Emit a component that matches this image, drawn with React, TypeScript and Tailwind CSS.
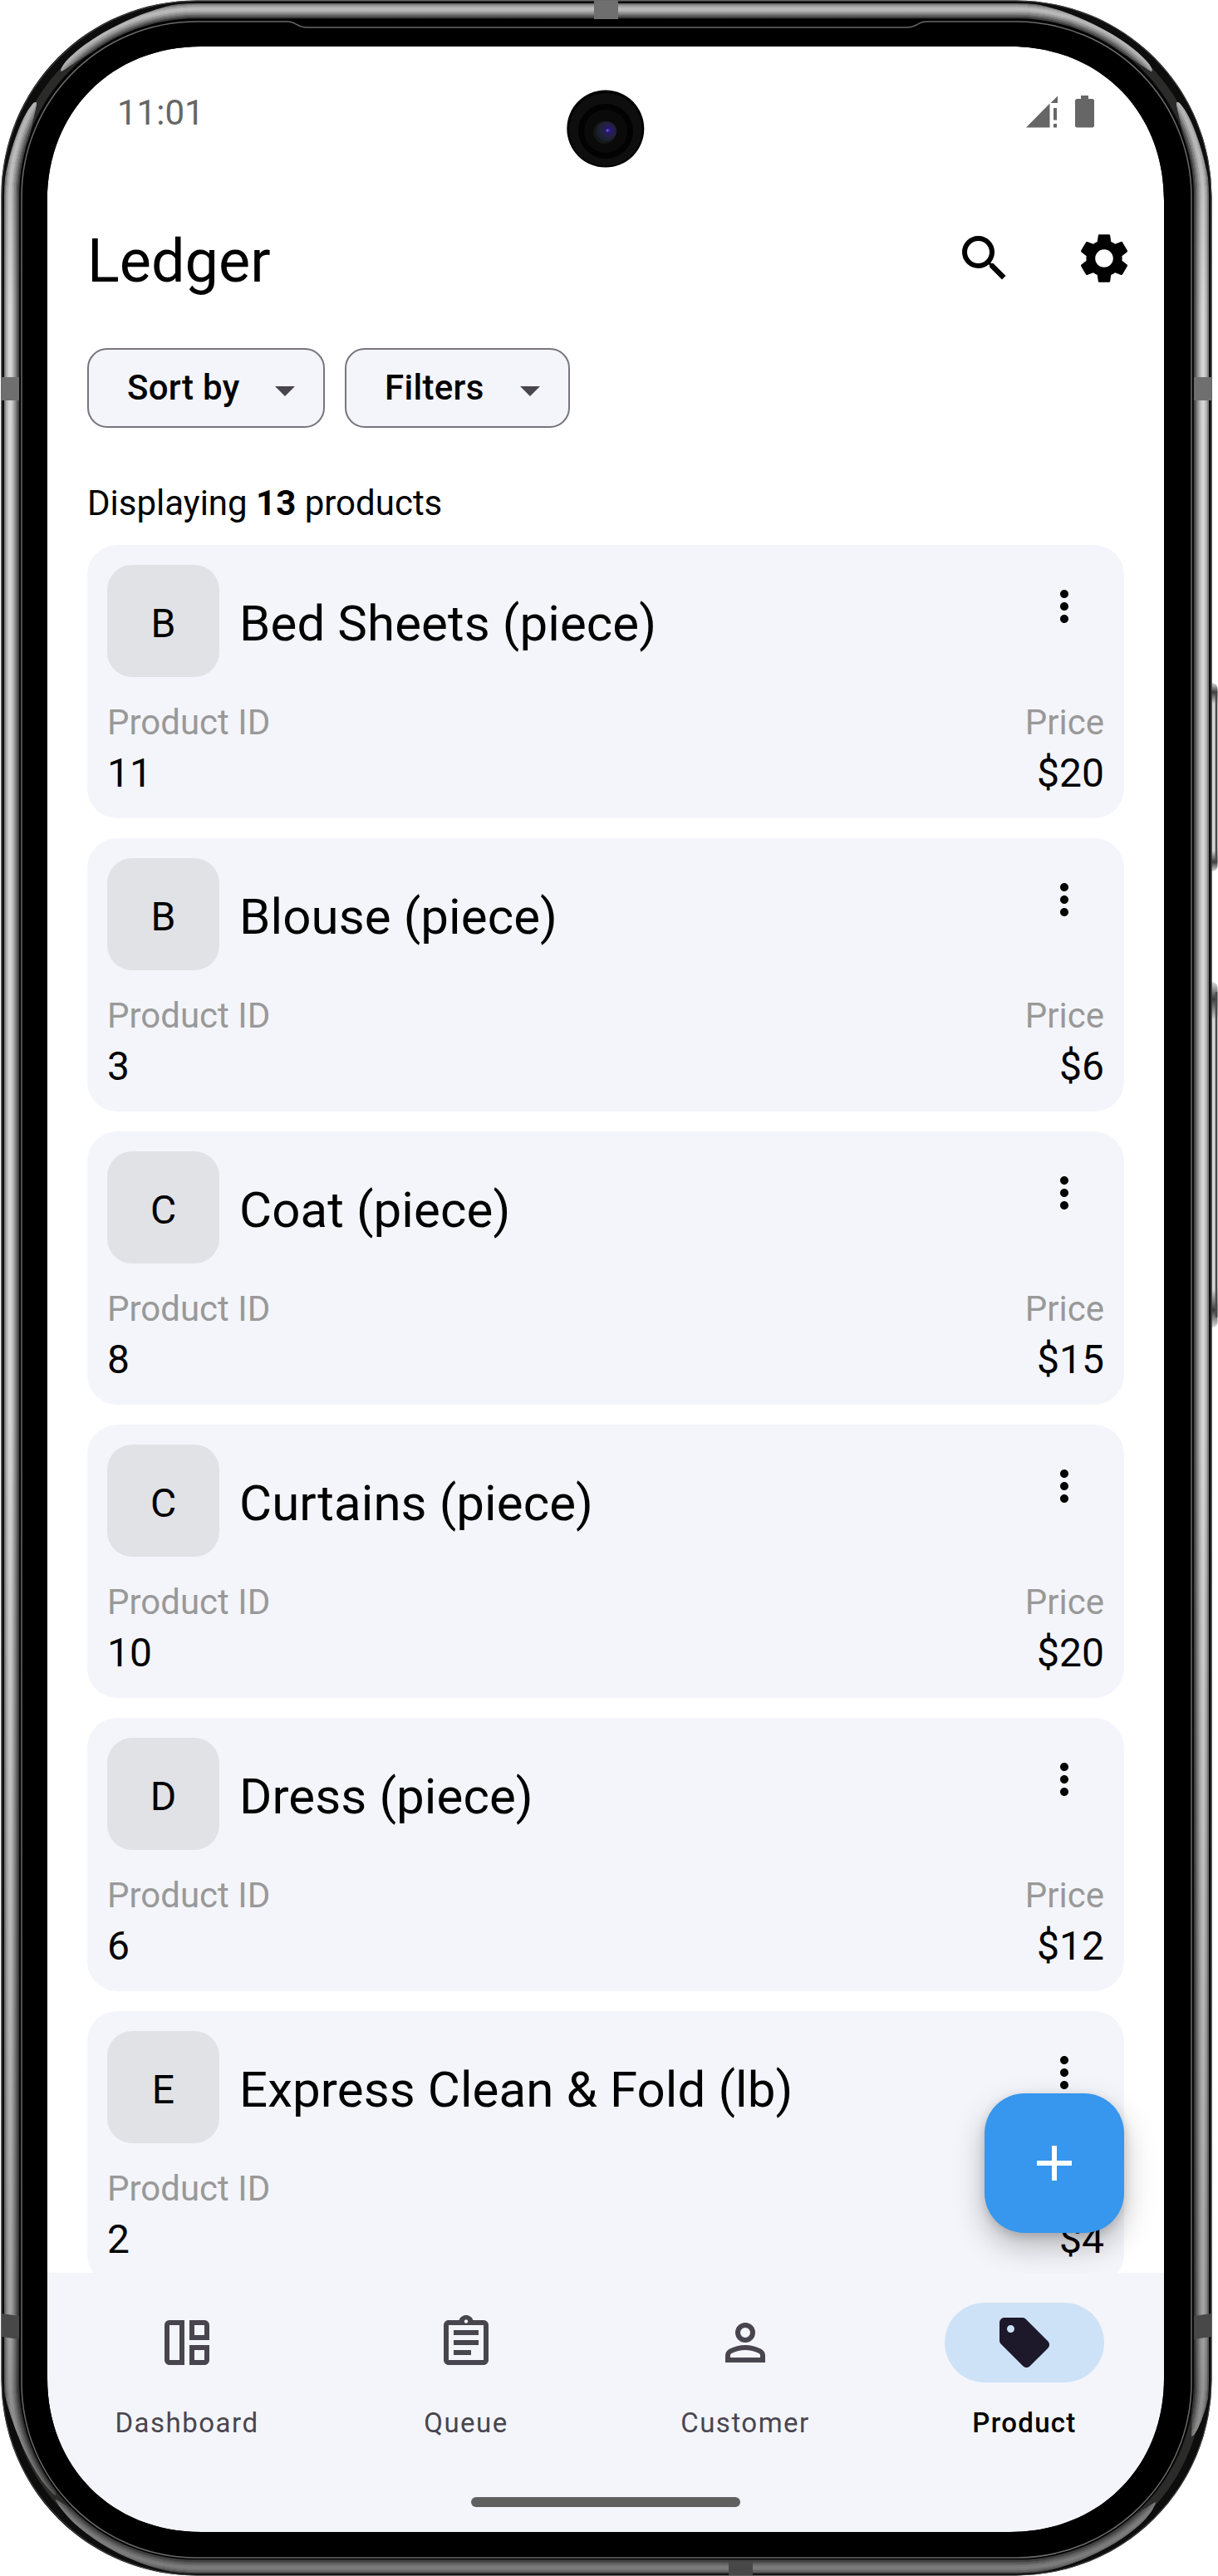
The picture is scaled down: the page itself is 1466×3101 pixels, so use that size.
import React from "react";
import { MdSearch, MdSettings, MdMoreVert, MdAdd, MdOutlineAssignment, MdSell } from "react-icons/md";

const products = [
  { name: "Bed Sheets (piece)", id: "11", price: "$20" },
  { name: "Blouse (piece)", id: "3", price: "$6" },
  { name: "Coat (piece)", id: "8", price: "$15" },
  { name: "Curtains (piece)", id: "10", price: "$20" },
  { name: "Dress (piece)", id: "6", price: "$12" },
  { name: "Express Clean & Fold (lb)", id: "2", price: "$4" },
];

function DashboardIcon() {
  return (
    <svg className="size-[72px]" viewBox="0 0 24 24" fill="currentColor" fillRule="evenodd">
      <path d="M11 21H5c-1.1 0-2-.9-2-2V5c0-1.1.9-2 2-2h6zM5 5v14h4V5zM13 3h6c1.100 0 2 .9 2 2v6h-8zm2 2v4h4V5zM13 13h8v6c0 1.100-.9 2-2 2h-6zm2 2v4h4v-4z" />
    </svg>
  );
}

function PersonIcon() {
  return (
    <svg className="size-[72px]" viewBox="0 -960 960 960" fill="currentColor">
      <path d="M480-480q-66 0-113-47t-47-113q0-66 47-113t113-47q66 0 113 47t47 113q0 66-47 113t-113 47ZM160-160v-112q0-34 17.500-62.500T224-378q62-31 126-46.500T480-440q66 0 130 15.500T736-378q29 15 46.500 43.500T800-272v112H160Zm80-80h480v-32q0-11-5.500-20T700-306q-54-27-109-40.500T480-360q-56 0-111 13.500T260-306q-9 5-14.500 14t-5.500 20v32Zm240-320q33 0 56.500-23.500T560-640q0-33-23.500-56.500T480-720q-33 0-56.500 23.500T400-640q0 33 23.500 56.500T480-560Z" />
    </svg>
  );
}

function StatusBar() {
  return (
    <header className="flex h-[160px] shrink-0 items-center justify-between pl-[84px] pr-[84px] text-[#666]">
      <span className="text-[42px] leading-[60px]">11:01</span>
      <div className="mb-[3px] flex items-center gap-[21px]">
        <svg className="h-[39px] w-[38px]" viewBox="0 0 38 39" fill="currentColor">
          <path d="M0 38.500 28.500 9.500v29zM29.500 9 38 .500V9zM33 15h4v14.500h-4zM33 34h4v4.500h-4z" />
        </svg>
        <svg className="h-[39px] w-[23px]" viewBox="0 0 23 39" fill="currentColor">
          <path d="M7 0h9v4h4.500a2.500 2.500 0 0 1 2.500 2.500v29.500a2.500 2.500 0 0 1-2.500 2.500h-18a2.500 2.500 0 0 1-2.500-2.500V6.500a2.500 2.500 0 0 1 2.500-2.500H7z" />
        </svg>
      </div>
    </header>
  );
}

function Chip({ label, width }: { label: string; width: string }) {
  return (
    <button className={`flex h-[96px] ${width} items-center justify-between rounded-[24px] border-2 border-[#79747e] bg-[#f4f5fa] pl-[46px] pr-[34px]`}>
      <span className="text-[42px] font-medium leading-[60px] tracking-[0.3px]">{label}</span>
      <svg className="mt-[8px] h-[12px] w-[24px] text-[#49454f]" viewBox="0 0 24 12" fill="currentColor">
        <path d="M0 0h24L12 12z" />
      </svg>
    </button>
  );
}

function ProductCard({ name, id, price }: { name: string; id: string; price: string }) {
  return (
    <article className="flex h-[329px] shrink-0 flex-col rounded-[36px] bg-[#f4f5fa] p-[24px]">
      <div className="flex h-[135px] items-center">
        <div className="flex size-[135px] items-center justify-center rounded-[30px] bg-[#e1e2e6] pt-[7px] text-[48px] leading-[72px]">
          {name[0]}
        </div>
        <h2 className="ml-[24px] flex-1 pt-[6px] text-[60px] leading-[84px] tracking-[0.1px]">{name}</h2>
        <MdMoreVert className="mb-[35px] mr-[18px] size-[60px]" />
      </div>
      <div className="mt-[25px] flex justify-between text-[42px] leading-[60px] text-[#999]">
        <span>Product ID</span>
        <span>Price</span>
      </div>
      <div className="mt-px flex justify-between text-[48px] leading-[60px]">
        <span>{id}</span>
        <span>{price}</span>
      </div>
    </article>
  );
}

function NavItem({ label, icon, active = false }: { label: string; icon: React.ReactNode; active?: boolean }) {
  return (
    <div className="flex flex-1 flex-col items-center pt-[36px]">
      <div className={active ? "flex h-[96px] w-[192px] items-center justify-center rounded-full bg-[#cde2f6] text-[#1d192b]" : "flex h-[96px] w-[192px] items-center justify-center text-[#49454f]"}>
        {icon}
      </div>
      <span className={active ? "mt-[25px] text-[33px] font-medium leading-[48px] tracking-[1.3px] text-black" : "mt-[25px] text-[33px] leading-[48px] tracking-[1.5px] text-[#49454f]"}>
        {label}
      </span>
    </div>
  );
}

const rings: { inset: number; width: number; color: string }[] = [
  { inset: 4, width: 2, color: "#7d7d7d" },
  { inset: 6, width: 2.500, color: "#adadad" },
  { inset: 8, width: 2.500, color: "#c6c6c6" },
  { inset: 10, width: 3, color: "#d6d6d6" },
  { inset: 12, width: 2.500, color: "#cecece" },
  { inset: 14, width: 2.500, color: "#b4b4b4" },
  { inset: 16, width: 2.500, color: "#969696" },
  { inset: 18, width: 2.500, color: "#707070" },
  { inset: 20, width: 2, color: "#484848" },
];

const screenHole =
  "M57 241C57 134 135 56 242 56H1216C1323 56 1401 134 1401 241V2863C1401 2970 1323 3048 1216 3048H242C135 3048 57 2970 57 2863Z";

function PhoneFrame() {
  return (
    <svg className="pointer-events-none absolute inset-0" width="1466" height="3101" viewBox="0 0 1466 3101" fill="none">
      <defs>
        <linearGradient id="shade" x1="0" y1="0" x2="0" y2="3101" gradientUnits="userSpaceOnUse">
          <stop offset="0" stopColor="#000" stopOpacity="0.120" />
          <stop offset="0.030" stopColor="#000" stopOpacity="0.180" />
          <stop offset="0.120" stopColor="#000" stopOpacity="0" />
          <stop offset="0.550" stopColor="#000" stopOpacity="0" />
          <stop offset="0.900" stopColor="#000" stopOpacity="0.240" />
          <stop offset="0.970" stopColor="#000" stopOpacity="0.420" />
          <stop offset="1" stopColor="#000" stopOpacity="0.420" />
        </linearGradient>
        <linearGradient id="key" x1="0" y1="0" x2="0" y2="1">
          <stop offset="0" stopColor="#ddd" />
          <stop offset="0.050" stopColor="#3c3c3c" />
          <stop offset="0.110" stopColor="#d4d4d4" />
          <stop offset="0.890" stopColor="#d4d4d4" />
          <stop offset="0.950" stopColor="#3c3c3c" />
          <stop offset="1" stopColor="#ddd" />
        </linearGradient>
        <radialGradient id="lens" cx="0.620" cy="0.450" r="0.600">
          <stop offset="0" stopColor="#3a25a8" />
          <stop offset="0.200" stopColor="#241a66" />
          <stop offset="0.600" stopColor="#261f3c" />
          <stop offset="1" stopColor="#11242a" />
        </radialGradient>
        <clipPath id="highlights">
          <path d="M0 250C5 205 20 150 37 128Q42 121 44 124C45 130 27 180 27 260V2840C27 2915 46 2960 62 2990Q68 3001 67 3004C35 2978 0 2890 0 2840Z" />
          <path d="M1460 250C1455 205 1440 150 1423 128Q1418 121 1416 124C1415 130 1433 180 1433 260V2840C1433 2890 1436 2915 1434 2932C1438 2938 1460 2890 1460 2840Z" />
          <path d="M240 0C170 8 100 48 77 77Q72 84 74 86C78 86 145 28 240 26H1220C1315 28 1382 86 1386 86Q1388 84 1383 77C1360 48 1290 8 1220 0Z" />
          <path d="M240 3101C150 3094 82 3040 67 3009C90 3020 150 3076 240 3078H1220C1300 3077 1360 3030 1391 3012C1382 3045 1300 3096 1220 3101Z" />
        </clipPath>
      </defs>

      <g>
        <rect x="1452" y="822" width="13.500" height="227" rx="7" fill="url(#key)" />
        <path d="M1464 832V1038" stroke="#4b4b4b" strokeWidth="2.500" />
        <rect x="1452" y="1182" width="13.500" height="416" rx="7" fill="url(#key)" />
        <path d="M1464 1194V1586" stroke="#4b4b4b" strokeWidth="2.500" />
      </g>

      <path
        fillRule="evenodd"
        fill="#0d0d0d"
        d={"M1.500 237C1.500 105 105 .500 237 .500H1222C1354 .500 1458.500 105 1458.500 237V2864C1458.500 2996 1354 3100.500 1222 3100.500H237C105 3100.500 1.500 2996 1.500 2864Z" + screenHole}
      />
      <rect x="2" y="1" width="1456" height="3099" rx="235" stroke="#4a4a4a" strokeWidth="1" />
      <rect x="17" y="16" width="1426" height="3070" rx="220" stroke="#2b2b2a" strokeWidth="10" />
      <g clipPath="url(#highlights)">
        {rings.map((r) => (
          <rect
            key={r.inset}
            x={2 + r.inset}
            y={1 + r.inset}
            width={1456 - 2 * r.inset}
            height={3100 - 2 * r.inset}
            rx={235 - r.inset}
            stroke={r.color}
            strokeWidth={r.width}
          />
        ))}
        <rect x="14" y="13" width="1432" height="3076" rx="223" stroke="url(#shade)" strokeWidth="22" />
      </g>
      <path
        fillRule="evenodd"
        fill="#000"
        d={"M24 235C24 118 118 23 235 23H1225C1342 23 1436 118 1436 235V2868C1436 2985 1342 3081 1225 3081H235C118 3081 24 2985 24 2868Z" + screenHole}
      />
      <path
        d="M26 237C26 120 120 26 237 26H346C356 26 358 33 369 33H1092C1103 33 1105 26 1115 26H1223C1340 26 1434 120 1434 237V2868C1434 2985 1340 3079 1223 3079H237C120 3079 26 2985 26 2868Z"
        stroke="#6a6a6a"
        strokeWidth="1.500"
      />

      <g fill="#6f6f6f">
        <path d="M2 454h21v28H2zM1437 454h21v28h-21zM715 1h29v22h-29z" />
      </g>
      <g fill="#484848">
        <path d="M2 2785l21 3v28l-21-3zM1458 2785l-21 3v28l21-3zM877 3084h29v16h-29z" />
      </g>

      <circle cx="728.800" cy="155" r="46.500" fill="#000" />
      <circle cx="728.800" cy="156" r="44" fill="#0e0e0e" />
      <circle cx="729" cy="158" r="33" fill="#020202" />
      <circle cx="729" cy="158" r="26" fill="#0a0a0a" />
      <circle cx="727.500" cy="159.500" r="13.500" fill="#171717" />
      <circle cx="730" cy="158" r="12" fill="url(#lens)" />
      <circle cx="731" cy="157" r="1.500" fill="#6655f0" />
    </svg>
  );
}

export default function App() {
  return (
    <div className="relative h-[3101px] w-[1466px] overflow-hidden bg-white pl-[57px] pt-[56px] font-['Roboto',sans-serif] text-black">
      <main className="relative flex h-[2992px] w-[1344px] flex-col overflow-hidden rounded-[150px] bg-white">
        <StatusBar />
        <div className="flex h-[190px] shrink-0 items-center pl-[48px] pr-[36px]">
          <h1 className="flex-1 pt-[8px] text-[72px] leading-[96px]">Ledger</h1>
          <MdSearch className="size-[72px]" />
          <MdSettings className="ml-[72px] size-[72px]" />
        </div>
        <div className="mt-[13px] flex shrink-0 gap-[24px] px-[48px]">
          <Chip label="Sort by" width="w-[286px]" />
          <Chip label="Filters" width="w-[271px]" />
        </div>
        <p className="mb-[20px] mt-[61px] shrink-0 px-[48px] text-[42px] leading-[60px]">
          Displaying <b className="font-bold">13</b> products
        </p>
        <section className="flex min-h-0 flex-1 flex-col gap-[24px] overflow-hidden px-[48px]">
          {products.map((p) => (
            <ProductCard key={p.id} {...p} />
          ))}
        </section>
        <button className="absolute bottom-[360px] right-[48px] flex size-[168px] items-center justify-center rounded-[48px] bg-[#3796ee] text-white shadow-[0_16px_36px_rgba(0,0,0,0.26),0_4px_12px_rgba(0,0,0,0.14)]">
          <MdAdd className="size-[72px]" />
        </button>
        <nav className="relative flex h-[312px] shrink-0 flex-col bg-[#f4f5fa]">
          <div className="flex h-[270px]">
            <NavItem label="Dashboard" icon={<DashboardIcon />} />
            <NavItem label="Queue" icon={<MdOutlineAssignment className="size-[72px]" />} />
            <NavItem label="Customer" icon={<PersonIcon />} />
            <NavItem label="Product" active icon={<MdSell className="size-[72px]" />} />
          </div>
          <div className="mx-auto h-[12px] w-[324px] rounded-full bg-[#606060]" />
        </nav>
      </main>
      <PhoneFrame />
    </div>
  );
}
